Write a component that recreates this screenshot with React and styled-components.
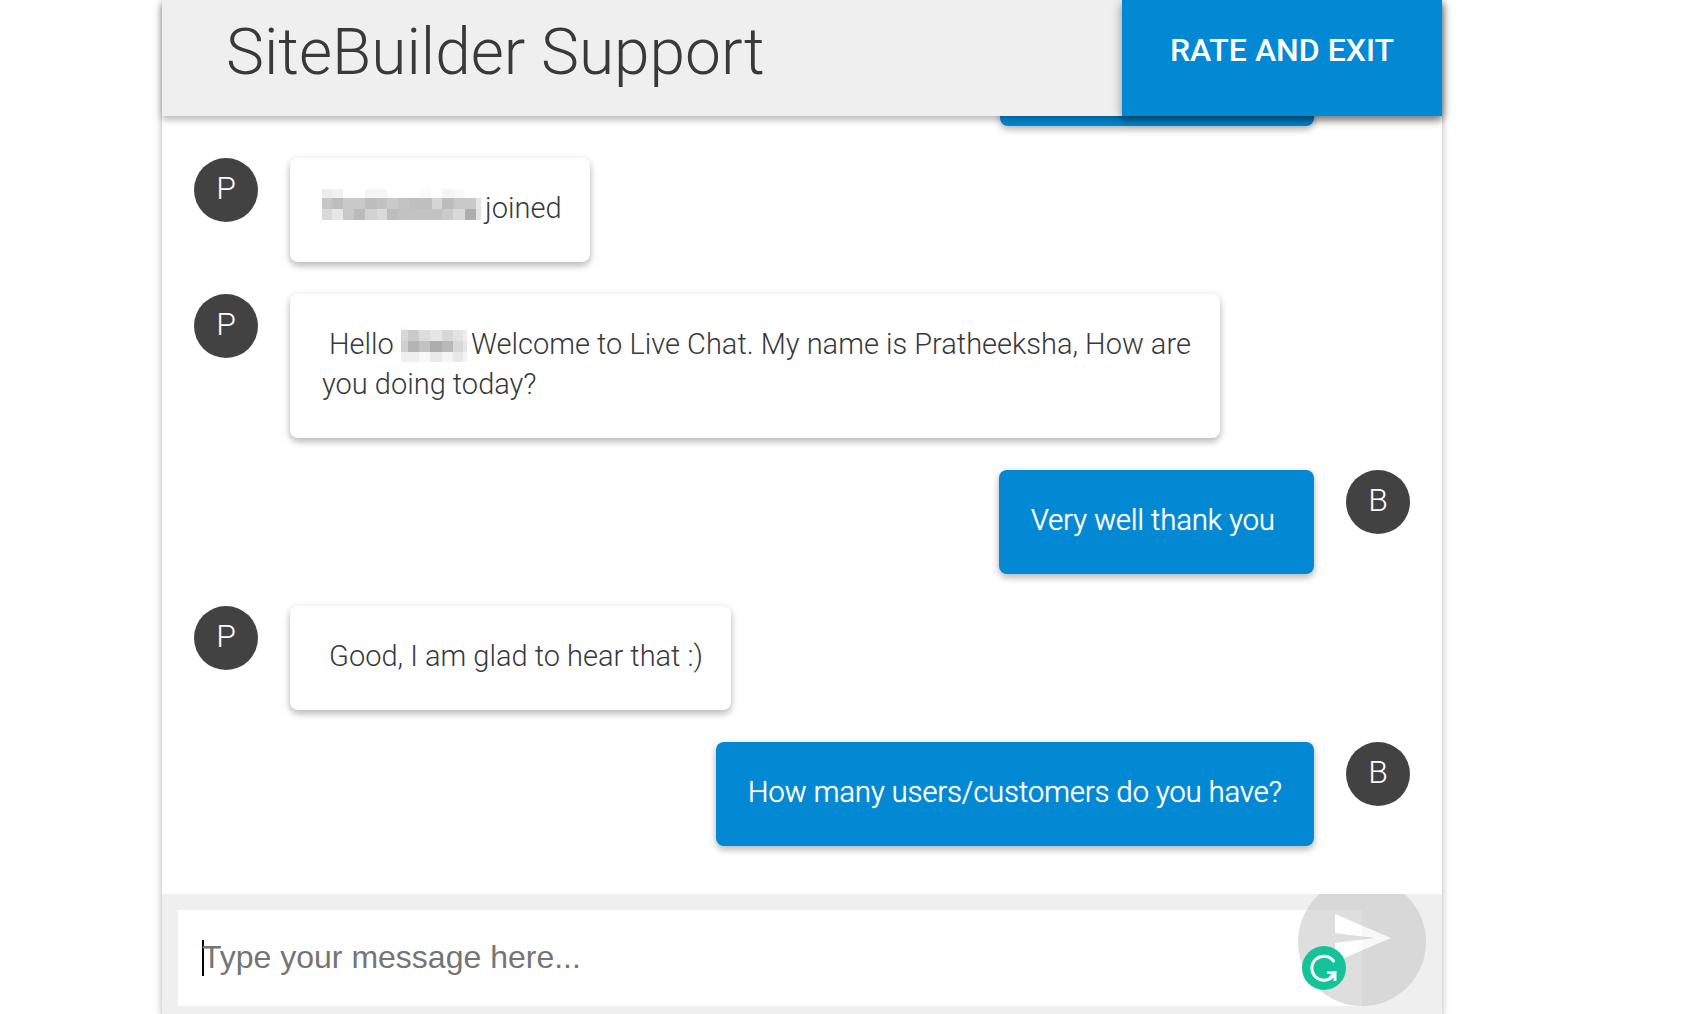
import React from 'react'
import { styled, createGlobalStyle, ThemeProvider } from 'styled-components';

const theme = {
  colors: {
    primary: '#0388d3',
    bar: '#efefef',
    avatar: '#424242',
    text: '#37393b',
    placeholder: '#757575',
    white: '#ffffff',
  },
  shadows: {
    low: '0 4px 6px 0 rgb(0 0 0 / 18%), 0 2px 10px 0 rgb(0 0 0 / 14%)',
    high: '0 4px 8px 0 rgb(0 0 0 / 26%), 0 2px 12px 0 rgb(0 0 0 / 18%)',
  },
};

// [x, y, width, height, grey]
const LONG_NAME = [
  [0, 1, 10, 9, '#ececec'], [10, 1, 11, 9, '#f0f0f0'], [43, 1, 22, 9, '#f5f5f5'],
  [98, 1, 11, 9, '#fafafa'], [120, 1, 12, 9, '#f5f5f5'], [132, 1, 11, 9, '#f9f9f9'],
  [0, 10, 10, 11, '#c6c6c6'], [10, 10, 11, 11, '#bdbdbd'], [21, 10, 22, 11, '#c9c9c9'],
  [43, 10, 12, 11, '#bdbdbd'], [55, 10, 10, 11, '#c2c2c2'], [65, 10, 11, 11, '#cacaca'],
  [76, 10, 11, 11, '#c3c3c3'], [87, 10, 23, 11, '#bfbfbf'], [110, 10, 10, 11, '#d6d6d6'],
  [120, 10, 12, 11, '#bdbdbd'], [132, 10, 22, 11, '#c9c9c9'], [154, 10, 5, 11, '#e6e6e6'],
  [0, 21, 10, 11, '#d9d9d9'], [10, 21, 11, 11, '#e6e6e6'], [21, 21, 11, 11, '#c9c9c9'],
  [32, 21, 11, 11, '#bababa'], [43, 21, 12, 11, '#d2d2d2'], [55, 21, 10, 11, '#dadada'],
  [65, 21, 11, 11, '#bebebe'], [76, 21, 44, 11, '#c2c2c2'], [120, 21, 11, 11, '#cacaca'],
  [131, 21, 12, 11, '#d9d9d9'], [143, 21, 11, 11, '#adaeb0'], [154, 21, 5, 11, '#e3e3e3'],
];

const SHORT_NAME = [
  [0, 3, 7, 3, '#f8f8f8'],
  [0, 6, 7, 11, '#d6d6d6'], [7, 6, 11, 11, '#cacaca'], [18, 6, 11, 11, '#dcdcdc'],
  [29, 6, 12, 11, '#e6e6e6'], [41, 6, 11, 11, '#d8d8d8'], [52, 6, 10, 11, '#e3e3e3'],
  [62, 6, 4, 11, '#ededed'],
  [0, 17, 7, 11, '#cfcfcf'], [7, 17, 11, 11, '#b4b4b5'], [18, 17, 11, 11, '#c2c2c2'],
  [29, 17, 12, 11, '#acadaf'], [41, 17, 11, 11, '#b9b9ba'], [52, 17, 10, 11, '#d8d8d8'],
  [62, 17, 4, 11, '#e6e6e6'],
  [0, 28, 18, 10, '#efefef'], [18, 28, 11, 10, '#f8f8f8'], [29, 28, 12, 10, '#eaeaea'],
  [41, 28, 11, 10, '#f5f5f5'], [52, 28, 10, 10, '#e8e8e8'], [62, 28, 4, 10, '#f3f3f3'],
];

function HiddenName({ cells, width }) {
  return (
    <HiddenNameStyled width={width} height={40} shapeRendering="crispEdges" role="img" aria-label="hidden name">
      {cells.map(([x, y, w, h, fill]) => (
        <rect key={`${x}-${y}`} x={x} y={y} width={w} height={h} fill={fill} />
      ))}
    </HiddenNameStyled>
  );
}

const messages = [
  { id: 1, own: true },
  { id: 2, initial: 'P', content: <><HiddenName cells={LONG_NAME} width={159} /> joined</> },
  {
    id: 3,
    initial: 'P',
    content: (
      <>
        &nbsp;Hello <HiddenName cells={SHORT_NAME} width={66} /> Welcome to Live Chat. My name is
        Pratheeksha, How are you doing today?
      </>
    ),
  },
  { id: 4, initial: 'B', own: true, content: <>Very well thank you&nbsp;</> },
  { id: 5, initial: 'P', content: <>&nbsp;Good, I am glad to hear that :)</> },
  { id: 6, initial: 'B', own: true, content: 'How many users/customers do you have?' },
];

function Message({ initial, own, content }) {
  return (
    <MessageStyled $own={own}>
      <Avatar>{initial}</Avatar>
      <Bubble $own={own} $empty={!content}>{content}</Bubble>
    </MessageStyled>
  );
}

export default function App() {
  return (
    <ThemeProvider theme={theme}>
      <GlobalStyle />
      <ChatPanel>
        <Header>
          <Title>SiteBuilder Support</Title>
          <ExitButton type="button">RATE AND EXIT</ExitButton>
        </Header>
        <MessageList>
          {messages.map((message) => (
            <Message key={message.id} {...message} />
          ))}
        </MessageList>
        <Composer onSubmit={(event) => event.preventDefault()}>
          <Field>
            <Caret />
            <MessageInput type="text" aria-label="Message" placeholder="Type your message here..." />
          </Field>
          <SendButton type="submit" aria-label="Send">
            <svg width="56" height="48" viewBox="0 0 56 48" fill="currentColor">
              <path d="M0 0L56 24L0 48V29L40 24L0 19Z" />
            </svg>
          </SendButton>
          <GrammarBadge viewBox="0 0 44 44" aria-hidden="true">
            <circle cx="22" cy="22" r="22" fill="#15c39a" />
            <path d="M31.5 15A12 12 0 1 0 31 30" fill="none" stroke="#fff" strokeWidth="3" strokeLinecap="round" />
            <path d="M25 26.5H33V35M32.5 27L28 32" fill="none" stroke="#fff" strokeWidth="3" />
          </GrammarBadge>
        </Composer>
      </ChatPanel>
    </ThemeProvider>
  );
}

const GlobalStyle = createGlobalStyle`
  * {
    box-sizing: border-box;
  }

  body {
    margin: 0;
    background: #fff;
    color: #37393b;
    font-family: Roboto, sans-serif;
    font-weight: 300;
    overflow: hidden;
  }
`;

const ChatPanel = styled.main`
  height: 100vh;
  margin: 0 250px 0 162px;
  display: flex;
  flex-direction: column;
  background: ${theme.colors.white};
  box-shadow: ${theme.shadows.low};
`;

const Header = styled.header`
  flex: none;
  height: 116px;
  display: flex;
  justify-content: space-between;
  background: ${theme.colors.bar};
  box-shadow: ${theme.shadows.low};
  z-index: 1;
`;

const Title = styled.h1`
  margin: 0;
  padding-left: 64px;
  font-size: 64px;
  font-weight: 300;
  line-height: 106px;
`;

const ExitButton = styled.button`
  width: 320px;
  border: none;
  padding: 0 0 16px;
  background: ${theme.colors.primary};
  color: ${theme.colors.white};
  font-family: inherit;
  font-size: 32px;
  font-weight: 500;
  box-shadow: ${theme.shadows.high};
`;

const MessageList = styled.ul`
  flex: 1;
  min-height: 0;
  margin: 0;
  padding: 0 32px 48px;
  display: flex;
  flex-direction: column;
  justify-content: flex-end;
  gap: 32px;
  list-style: none;
  overflow: hidden;
`;

const MessageStyled = styled.li`
  flex: none;
  display: flex;
  flex-direction: ${({ $own }) => ($own ? 'row-reverse' : 'row')};
  align-items: flex-start;
  gap: 32px;
`;

const Avatar = styled.span`
  flex: none;
  width: 64px;
  height: 64px;
  border-radius: 50%;
  background: ${theme.colors.avatar};
  color: ${theme.colors.white};
  font-size: 32px;
  line-height: 60px;
  text-align: center;
`;

const Bubble = styled.div`
  max-width: calc(100% - 286px);
  min-width: ${({ $empty }) => ($empty ? '314px' : '0')};
  min-height: 104px;
  padding: ${({ $own }) => ($own ? '30px 32px 34px' : '30px 28px 34px 32px')};
  border-radius: 8px;
  background: ${({ $own }) => ($own ? theme.colors.primary : theme.colors.white)};
  color: ${({ $own }) => ($own ? theme.colors.white : theme.colors.text)};
  font-size: 29px;
  line-height: 40px;
  text-shadow: ${({ $own }) => ($own ? '0 0 1px #fff' : 'none')};
  box-shadow: ${theme.shadows.low};
`;

const HiddenNameStyled = styled.svg`
  margin-right: -3px;
  vertical-align: top;
`;

const Composer = styled.form`
  flex: none;
  height: 120px;
  padding: 16px 16px 8px;
  display: flex;
  align-items: flex-end;
  background: ${theme.colors.bar};
  position: relative;
  overflow: hidden;
`;

const Field = styled.div`
  flex: 1;
  height: 96px;
  margin-right: 64px;
  padding: 0 24px;
  display: flex;
  align-items: center;
  background: ${theme.colors.white};
`;

const Caret = styled.span`
  width: 2px;
  height: 36px;
  margin-right: -2px;
  background: #000;
`;

const MessageInput = styled.input`
  flex: 1;
  border: none;
  outline: none;
  padding: 0 0 2px;
  background: transparent;
  color: ${theme.colors.text};
  font-family: "Liberation Sans", Arial, sans-serif;
  font-size: 32px;

  &::placeholder {
    color: ${theme.colors.placeholder};
    opacity: 1;
  }
`;

const SendButton = styled.button`
  flex: none;
  width: 128px;
  height: 128px;
  margin-left: -128px;
  border: none;
  border-radius: 50%;
  padding: 0 0 8px 2px;
  display: flex;
  align-items: center;
  justify-content: center;
  background: #c9c9c9;
  color: ${theme.colors.white};
  opacity: 0.6;
`;

// sits on top of the send button
const GrammarBadge = styled.svg`
  position: absolute;
  right: 96px;
  bottom: 24px;
  width: 44px;
  height: 44px;
`;
